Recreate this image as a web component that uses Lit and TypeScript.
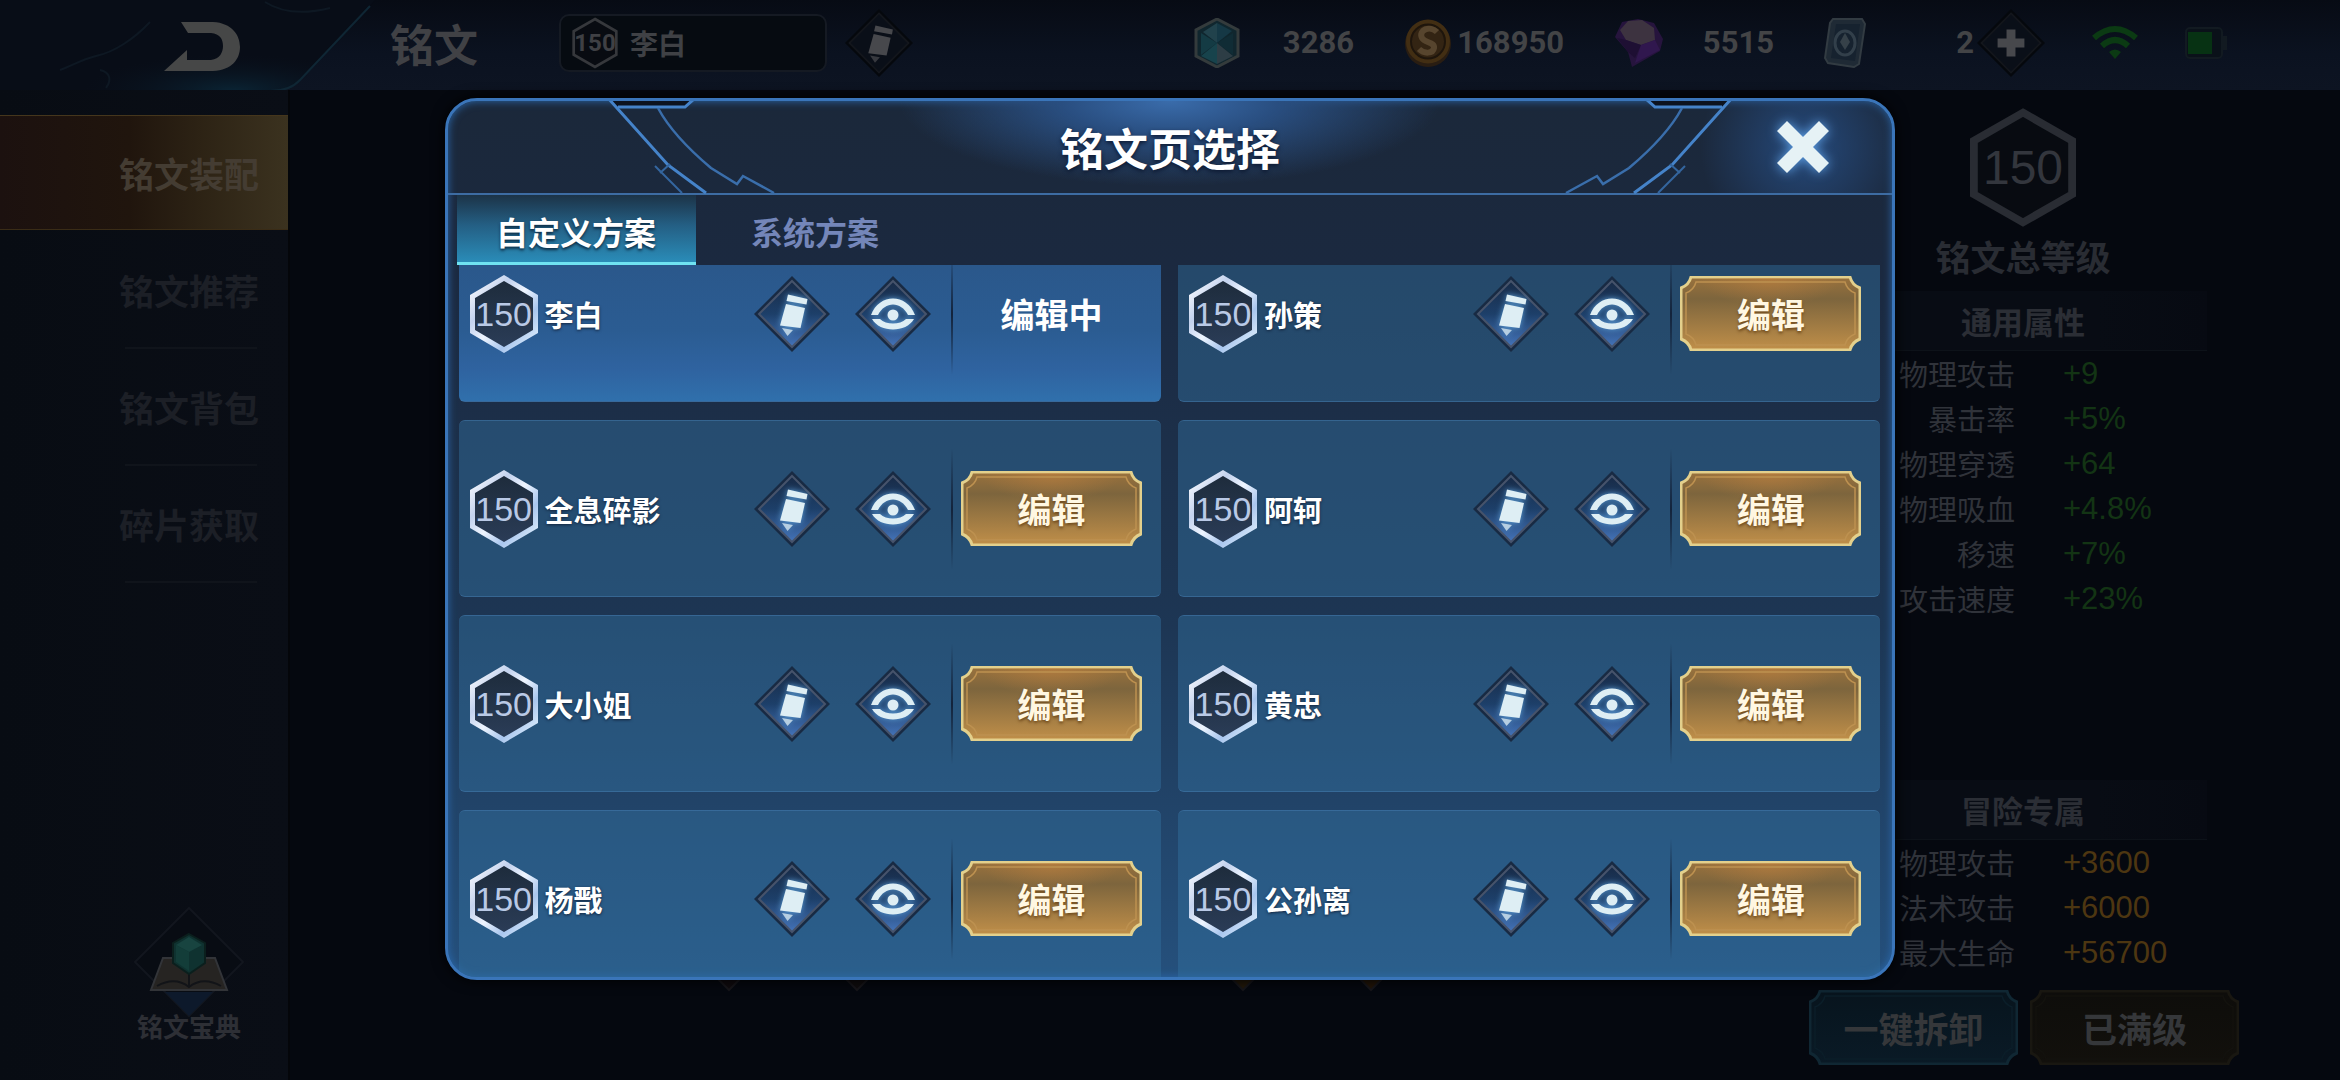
import { LitElement, html, svg, css } from "lit";
import { customElement, property, state } from "lit/decorators.js";
import { classMap } from "lit/directives/class-map.js";

const base = css`
  *, *::before, *::after { box-sizing: border-box; }
  button { font: inherit; color: inherit; background: none; border: 0; padding: 0; margin: 0; cursor: pointer; }
  svg { display: block; }
`;

/** Hexagonal level badge; the size variant picks its dimensions. */
@customElement("level-badge")
class LevelBadge extends LitElement {
  @property() level = "150";
  @property() variant: "card" | "large" | "small" = "card";

  static styles = [base, css`
    :host { display: block; flex: none; }
    .badge { display: grid; place-items: center; font-family: "Liberation Sans", "Noto Sans CJK SC", sans-serif; font-weight: 400; }
    .badge > * { grid-area: 1 / 1; }
    .card { width: 68px; height: 78px; font-size: 34px; line-height: 34px; color: #b9c9e6; }
    .large { width: 106px; height: 119px; font-size: 48px; line-height: 48px; color: #33363d; }
    .small { width: 46px; height: 52px; font-family: Roboto, sans-serif; font-weight: 700; font-size: 24px; line-height: 24px; color: #3f4044; }
    .shape { width: 100%; height: 100%; }
  `];

  render() {
    const card = this.variant === "card";
    const stroke = card ? "url(#rim)" : this.variant === "large" ? "#292c33" : "#36383c";
    return html`
      <div class="badge ${this.variant}">
        <svg class="shape" viewBox="0 0 68 78" preserveAspectRatio="none" aria-hidden="true">
          <defs>
            <linearGradient id="rim" x1="0" y1="0" x2="1" y2="1">
              <stop offset="0" stop-color="#ffffff" /><stop offset=".3" stop-color="#c3d2ee" />
              <stop offset=".5" stop-color="#eef5ff" /><stop offset=".72" stop-color="#a9c6ee" />
              <stop offset="1" stop-color="#e9f6ff" />
            </linearGradient>
            <linearGradient id="core" x1="0" y1="0" x2="0" y2="1">
              <stop offset="0" stop-color="#1d2b3b" /><stop offset="1" stop-color="#2b3d58" />
            </linearGradient>
          </defs>
          <path d="M34 3 L65.5 21.500 V56.500 L34 75 L2.500 56.500 V21.500 Z"
            fill=${card ? "url(#core)" : "#080b11"} stroke=${stroke} stroke-width=${this.variant === "small" ? 4 : 5} />
        </svg>
        <span>${this.level}</span>
      </div>`;
  }
}

const pencil = svg`
  <path d="M34 18.500 L53.500 23 L52.500 28.500 L32.500 25Z" />
  <path d="M32 28 L51 32 L46.500 52 L26 49.500Z" />
  <path d="M28 52 L39 54 L33.500 60Z" opacity=".75" />`;
const eye = svg`
  <path d="M16 39 C24 17 52 17 60 39 H53 C46 25 30 25 23 39Z" />
  <path d="M17 43 H25 C31 49 45 49 51 43 H59 C51 57 25 57 17 43Z" />
  <circle cx="38" cy="39" r="5.500" />`;
const plus = svg`<path d="M33 23 h10 v10 h10 v10 h-10 v10 h-10 v-10 h-10 v-10 h10z" />`;

/** Diamond-framed icon button. */
@customElement("diamond-button")
class DiamondButton extends LitElement {
  @property() icon: "pencil" | "eye" | "plus" = "pencil";
  @property() label = "";
  @property({ type: Boolean }) dim = false;

  static styles = [base, css`
    :host { display: block; flex: none; }
    .hit { display: block; width: 76px; height: 76px; }
    .dim { width: 68px; height: 68px; }
    .glyph { fill: #deeef4; filter: drop-shadow(0 0 3px #5d9fd8); }
    .dim .glyph { fill: #47484c; filter: none; }
  `];

  render() {
    const glyph = this.icon === "pencil" ? pencil : this.icon === "eye" ? eye : plus;
    return html`
      <button class=${classMap({ hit: true, dim: this.dim })} aria-label=${this.label}>
        <svg width="100%" height="100%" viewBox="0 0 76 76" aria-hidden="true">
          <defs>
            <linearGradient id="face" x1="0" y1="0" x2="0" y2="1">
              <stop offset="0" stop-color="#182b47" /><stop offset=".5" stop-color="#1d3f69" />
              <stop offset="1" stop-color="#4574ba" />
            </linearGradient>
          </defs>
          <path d="M38 0 L76 38 L38 76 L0 38Z" fill=${this.dim ? "#05080d" : "#182a43"} />
          <path d="M38 5 L71 38 L38 71 L5 38Z" fill=${this.dim ? "#0a0f18" : "url(#face)"}
            stroke=${this.dim ? "#13161c" : "#46536b"} stroke-width="2" />
          <g class="glyph">${glyph}</g>
        </svg>
      </button>`;
  }
}

/** Button on a plate with notched corners. */
@customElement("plate-button")
class PlateButton extends LitElement {
  @property() label = "";
  @property() tone: "gold" | "dimblue" | "dimgold" = "gold";

  static styles = [base, css`
    :host { display: block; flex: none; }
    .plate { display: grid; width: 209px; height: 75px; place-items: center; font-size: 35px; line-height: 40px; font-weight: 700; color: #35373a; }
    .plate > * { grid-area: 1 / 1; }
    .gold { width: 181px; font-size: 34px; color: #fff7e2; text-shadow: 0 2px 3px #6f4a1c; }
    .shape { width: 100%; height: 100%; }
  `];

  render() {
    const w = this.tone === "gold" ? 181 : 209;
    const tones = {
      gold: { rim: "#e3d08c", line: "#bd9150", a: "#9a723d", b: "#7d653d", c: "#c08f49" },
      dimblue: { rim: "#102733", line: "#0b1e29", a: "#08141d", b: "#081620", c: "#0a1a26" },
      dimgold: { rim: "#191711", line: "#13120e", a: "#0e0d0b", b: "#0f0e0b", c: "#12100c" },
    };
    const t = tones[this.tone];
    const outline = (i: number) => {
      const r = w - i, b = 75 - i, n = i + 10;
      return `M${n} ${i} H${w - n} Q${w - n + 2} ${n - 2} ${r} ${n + 1} V${75 - n - 1} Q${w - n + 2} ${75 - n + 2} ${w - n} ${b}
        H${n} Q${n - 2} ${75 - n + 2} ${i} ${75 - n - 1} V${n + 1} Q${n - 2} ${n - 2} ${n} ${i}Z`;
    };
    return html`
      <button class="plate ${this.tone}">
        <svg class="shape" viewBox="0 0 ${w} 75" aria-hidden="true">
          <defs>
            <linearGradient id="fill" x1="0" y1="0" x2="0" y2="1">
              <stop offset="0" stop-color=${t.a} /><stop offset=".3" stop-color=${t.b} /><stop offset="1" stop-color=${t.c} />
            </linearGradient>
            <radialGradient id="sheen" cx=".5" cy="0" r=".4">
              <stop offset="0" stop-color="#c98540" stop-opacity=".5" /><stop offset="1" stop-color="#c98540" stop-opacity="0" />
            </radialGradient>
          </defs>
          <path d=${outline(1)} fill="url(#fill)" stroke=${t.rim} stroke-width="3" />
          ${this.tone === "gold" ? svg`<path d=${outline(2)} fill="url(#sheen)" />` : ""}
          <path d=${outline(6)} fill="none" stroke=${t.line} stroke-width="1.500" />
        </svg>
        <span>${this.label}</span>
      </button>`;
  }
}

const cornerArt = html`
  <svg width="340" height="97" viewBox="0 0 340 97" fill="none" aria-hidden="true">
    <path d="M163 -1 L171 8 H240 L249 -1Z" fill="#0c131f" />
    <g stroke="#4583c9" stroke-width="3">
      <path d="M163 0 L223 67 L261 95" />
      <path d="M173 9 H240 L249 1" />
      <path d="M210 68 L237 95 M215 75 L225 66" stroke="#34669f" stroke-width="2" />
      <path d="M213 10 Q228 38 266 70 L292 86 L298 78 L329 95" stroke="#3a6eab" stroke-width="2.500" />
    </g>
  </svg>`;

/** Dialog that picks which inscription page to edit. */
@customElement("page-dialog")
class PageDialog extends LitElement {
  @state() private tab = 0;
  @state() private current = 0;

  private tabs = ["自定义方案", "系统方案"];
  private pages = ["李白", "孙策", "全息碎影", "阿轲", "大小姐", "黄忠", "杨戬", "公孙离"];

  static styles = [base, css`
    :host { display: block; width: 62%; height: 100%; }
    .dialog {
      position: relative; height: 100%; display: flex; flex-direction: column; overflow: hidden;
      border: 3px solid #3a75b9; border-radius: 32px;
      background: linear-gradient(#1b283a 0, #1b2940 20%, #1d3654 60%, #25507c 100%);
      box-shadow: inset 0 0 9px #2b69ad, 0 0 14px #000;
    }
    .head {
      display: grid; grid-template-columns: 1fr auto 1fr; align-items: center; flex: none; height: 94px;
      border-bottom: 2px solid #3d6ca3;
      background:
        radial-gradient(ellipse 270px 85px at 50% 0, #3a6cab 0, #294e80 40%, transparent 100%),
        radial-gradient(circle 105px at 94% 46px, #25497b 0, transparent 100%);
    }
    .title { margin: 0; grid-column: 2; font-size: 44px; line-height: 52px; font-weight: 700; color: #fff; text-shadow: 0 2px 4px #0c1830; }
    .close { justify-self: end; margin-right: 60px; width: 58px; height: 58px; filter: drop-shadow(0 0 6px #5fa2e8); }
    .corner { position: absolute; top: -3px; left: -3px; pointer-events: none; }
    .mirror { left: auto; right: -3px; transform: scaleX(-1); }
    .tabs { display: flex; flex: none; padding: 0 9px; height: 70px; }
    .tab { width: 239px; font-size: 32px; line-height: 40px; font-weight: 700; color: #7486b9; padding-top: 5px; border-bottom: 3px solid transparent; }
    .on { color: #fff; text-shadow: 0 2px 3px #0d2c44; border-bottom-color: #6fe3f2; background: linear-gradient(#1c3347, #245f84 45%, #2a8cb8); }
    .list {
      flex: 1; min-height: 0; overflow-y: auto; scrollbar-width: none; margin: 0; padding: 0 12px 0 11px; list-style: none;
      display: grid; grid-template-columns: 1fr 1fr; grid-auto-rows: 177px; gap: 18px 17px; align-content: start;
    }
    .card {
      display: flex; align-items: center; padding: 0 19px 0 11px; border-radius: 6px;
      border: 1px solid rgba(70, 125, 175, .5); border-width: 1px 0;
      background: rgba(52, 112, 160, .45);
    }
    .picked { background: linear-gradient(#2a5587, #2b5c92 60%, #2f63a0 82%, #3070ac); }
    .name { flex: 1; min-width: 0; margin-left: 7px; font-size: 29px; line-height: 36px; font-weight: 700; color: #fff; text-shadow: 0 1px 3px #12233c; }
    .tools { display: flex; gap: 25px; padding-right: 20px; }
    .action { display: flex; align-items: center; height: 120px; padding-left: 8px; border-left: 2px solid; border-image: linear-gradient(transparent, #13233b 50%, transparent) 1; }
    .state { width: 181px; text-align: center; font-size: 34px; line-height: 40px; font-weight: 700; color: #fff; }
  `];

  firstUpdated() {
    this.renderRoot.querySelector(".list")!.scrollTop = 40;
  }

  render() {
    return html`
      <section class="dialog" role="dialog" aria-labelledby="dialog-title">
        <header class="head">
          <h2 class="title" id="dialog-title">铭文页选择</h2>
          <button class="close" aria-label="关闭">
            <svg width="58" height="58" viewBox="0 0 58 58" aria-hidden="true">
              <path d="M13 3 L29 19 L45 3 L55 13 L39 29 L55 45 L45 55 L29 39 L13 55 L3 45 L19 29 L3 13Z" fill="#e6f2f5" />
            </svg>
          </button>
        </header>
        <div class="corner">${cornerArt}</div>
        <div class="corner mirror">${cornerArt}</div>
        <div class="tabs" role="tablist">
          ${this.tabs.map((t, i) => html`
            <button role="tab" aria-selected=${i === this.tab} class=${classMap({ tab: true, on: i === this.tab })}
              @click=${() => (this.tab = i)}>${t}</button>`)}
        </div>
        <ul class="list">
          ${this.pages.map((name, i) => html`
            <li class=${classMap({ card: true, picked: i === this.current })}>
              <level-badge></level-badge>
              <span class="name">${name}</span>
              <div class="tools">
                <diamond-button icon="pencil" label="重命名"></diamond-button>
                <diamond-button icon="eye" label="查看"></diamond-button>
              </div>
              <div class="action">
                ${i === this.current
                  ? html`<span class="state">编辑中</span>`
                  : html`<plate-button label="编辑" @click=${() => (this.current = i)}></plate-button>`}
              </div>
            </li>`)}
        </ul>
      </section>`;
  }
}

const gemIcon = html`
  <svg width="46" height="50" viewBox="0 0 46 50" aria-hidden="true">
    <path d="M23 1 L44 12 V38 L23 49 L2 38 V12Z" fill="#10262e" stroke="#343b3c" stroke-width="3" />
    <path d="M23 5 L9 14 L23 25Z" fill="#21424c" /><path d="M23 5 L38 13 L23 25Z" fill="#153845" />
    <path d="M7 15 L23 25 L7 37Z" fill="#143b44" /><path d="M39 15 L23 25 L39 37Z" fill="#102c35" />
    <path d="M7 38 L23 25 L23 46Z" fill="#17434c" /><path d="M39 38 L23 25 L23 46Z" fill="#2d3d45" />
  </svg>`;
const coinIcon = html`
  <svg width="48" height="50" viewBox="0 0 48 50" aria-hidden="true">
    <ellipse cx="24" cy="26" rx="23" ry="23" fill="#291d12" />
    <circle cx="24" cy="23.500" r="22" fill="#422e13" /><circle cx="24" cy="23.500" r="17" fill="#332413" stroke="#1e150c" stroke-width="2" />
    <path d="M33 14 C26 7 14 12 18 20 C21 25 31 24 30 30 C29 36 20 36 15 31" fill="none" stroke="#57452e" stroke-width="6" />
  </svg>`;
const crystalIcon = html`
  <svg width="50" height="50" viewBox="0 0 50 50" aria-hidden="true">
    <path d="M1 19 L8 4 L24 1 L40 5 L49 21 L46 33 L18 49 L14 34Z" fill="#26143d" />
    <path d="M6 12 L14 3 L28 2 L40 10 L41 22 L27 27 L12 22Z" fill="#3d3340" />
    <path d="M12 22 L27 27 L21 40 L14 34 L3 20Z" fill="#1e0f33" /><path d="M27 27 L41 22 L46 32 L21 45Z" fill="#30174e" />
  </svg>`;
const cardIcon = html`
  <svg width="42" height="50" viewBox="0 0 42 50" aria-hidden="true">
    <path d="M9 1 H38 L41 6 L35 46 L30 49 L4 45 L1 40 L6 5Z" fill="#1f2a35" stroke="#323b42" stroke-width="2" />
    <path d="M12 6 H36 L31 43 L7 40Z" fill="#16222f" /><ellipse cx="21" cy="25" rx="10" ry="12" fill="none" stroke="#323f4a" stroke-width="3" />
    <path d="M21 15 L26 24 L21 32 L16 24Z" fill="#364149" />
  </svg>`;

/** Screen behind the dialog, plus the dialog itself. */
@customElement("app-root")
class AppRoot extends LitElement {
  private nav = ["铭文装配", "铭文推荐", "铭文背包", "碎片获取"];
  private wallet = [
    { icon: gemIcon, amount: "3286" }, { icon: coinIcon, amount: "168950" },
    { icon: crystalIcon, amount: "5515" }, { icon: cardIcon, amount: "2" },
  ];
  private general = [["物理攻击", "+9"], ["暴击率", "+5%"], ["物理穿透", "+64"], ["物理吸血", "+4.8%"], ["移速", "+7%"], ["攻击速度", "+23%"]];
  private adventure = [["物理攻击", "+3600"], ["法术攻击", "+6000"], ["最大生命", "+56700"]];

  static styles = [base, css`
    :host { display: block; font-family: "Noto Sans CJK SC", "Noto Sans", sans-serif; color: #3b3d43; }
    .screen { position: relative; display: flex; flex-direction: column; min-height: 100vh; overflow: hidden; background: #05080f; }
    .top { display: flex; align-items: center; flex: none; height: 90px; padding: 0 113px 4px 0; background: linear-gradient(#070b14, #0b1220 60%, #0d1422); }
    .back { align-self: flex-start; flex: none; width: 375px; height: 90px; }
    .heading { margin: 0 81px 0 15px; font-size: 44px; line-height: 52px; font-weight: 700; color: #404145; white-space: nowrap; }
    .preset { display: flex; align-items: center; gap: 12px; width: 268px; height: 58px; padding-left: 11px; font-size: 28px; line-height: 36px; font-weight: 700; color: #3f4145;
      border: 2px solid #151a23; border-radius: 10px; background: #060b11; }
    .rename { margin-left: 18px; }
    .wallet { display: flex; gap: 50px; margin: 0 7px 0 auto; padding: 0; list-style: none; }
    .purse { display: flex; align-items: center; justify-content: space-between; width: 160px; height: 50px; font-family: Roboto, sans-serif; font-weight: 700; font-size: 31px; line-height: 36px; color: #434446; }
    .purse:last-child { width: 150px; }
    .more { margin: 0 46px 0 -4px; }
    .battery { margin-left: 46px; }
    .body { display: flex; flex: 1; }
    .side { display: flex; flex-direction: column; justify-content: space-between; flex: none; width: 290px; padding: 25px 0 40px; background: linear-gradient(90deg, #080c13, #0a0e16); border-right: 2px solid #04060a; }
    .nav { margin: 0; padding: 0; list-style: none; }
    .item { height: 117px; }
    .link { width: 100%; height: 115px; padding-right: 29px; text-align: right; font-size: 35px; line-height: 44px; font-weight: 700; color: #1c1f26; }
    .active { color: #443c32; background: linear-gradient(90deg, #1c110f, #20150d 45%, #2c2214 68%, #3b321f); border-top: 1px solid #45361c; border-bottom: 1px solid #3a2c16; }
    .item::after { content: ""; display: block; width: 132px; height: 2px; margin-left: 125px; background: #10141b; }
    .item:first-child::after { background: none; }
    .codex { width: 198px; margin-left: 90px; font-size: 26px; line-height: 28px; font-weight: 700; color: #2d2f35; }
    .codex svg { margin: 0 auto -6px; }
    .stage { display: flex; flex: 1; align-items: flex-end; justify-content: center; gap: 350px; padding-bottom: 88px; }
    .runes { display: flex; gap: 92px; }
    .panel { display: flex; flex-direction: column; flex: none; width: 531px; padding: 18px 101px 15px 0; }
    .stats { width: 368px; margin-left: 30px; }
    .total { display: grid; justify-items: center; row-gap: 11px; font-size: 35px; line-height: 35px; font-weight: 700; color: #292c33; margin-bottom: 18px; }
    .band { margin: 0; height: 60px; font-size: 31px; line-height: 60px; font-weight: 700; text-align: center; color: #2b2e35; background: linear-gradient(90deg, #080c14 70%, #070a12); border-bottom: 1px solid #0d1219; }
    .table { width: 100%; border-collapse: collapse; font-size: 29px; line-height: 45px; }
    .label { width: 176px; padding: 0; text-align: right; font-weight: 400; color: #30333a; }
    .value { padding: 0 0 0 48px; font-family: "Liberation Sans", sans-serif; font-size: 31px; color: #133414; }
    .gold { color: #4d3611; }
    .lower { margin-top: auto; }
    .buttons { display: flex; justify-content: space-between; margin-top: 15px; }
    .overlay { position: absolute; inset: 0; display: flex; justify-content: center; padding: 98px 0 100px; }
  `];

  private rows(data: string[][], gold = false) {
    return html`
      <table class="table"><tbody>
        ${data.map(([k, v]) => html`<tr><th class="label" scope="row">${k}</th><td class=${classMap({ value: true, gold })}>${v}</td></tr>`)}
      </tbody></table>`;
  }

  private rune(color: string) {
    return html`<svg width="36" height="36" viewBox="0 0 36 36" aria-hidden="true"><path d="M18 2 L34 18 L18 34 L2 18Z" fill=${color} stroke="#17161a" stroke-width="2" /></svg>`;
  }

  render() {
    return html`
      <div class="screen">
        <header class="top">
          <button class="back" aria-label="返回">
            <svg width="375" height="94" viewBox="0 0 375 94" aria-hidden="true">
              <defs>
                <radialGradient id="glow" cx=".62" cy="1" r=".4">
                  <stop offset="0" stop-color="#0a2434" /><stop offset="1" stop-color="#0a111d" stop-opacity="0" />
                </radialGradient>
              </defs>
              <path d="M0 0 H375 L300 80 Q290 91 270 91 H0Z" fill="#080d17" />
              <path d="M0 0 H375 L300 80 Q290 91 270 91 H0Z" fill="url(#glow)" />
              <path d="M370 6 L300 80 Q290 91 270 91 H150" fill="none" stroke="#0f2634" stroke-width="2" />
              <path d="M150 22 C135 38 115 52 96 56 C80 60 72 66 60 70 M100 70 C110 72 112 80 106 88 M265 2 Q290 18 330 8" fill="none" stroke="#0e1823" stroke-width="2" />
              <path d="M181 22 H213 C232 23 240 35 240 47 C240 59 232 70 213 71 H164 L187 50 V60 H211 C220 59 223 52 223 46 C223 39 220 34 211 33 H188 Z" fill="#464747" />
            </svg>
          </button>
          <h1 class="heading">铭文</h1>
          <button class="preset"><level-badge variant="small"></level-badge>李白</button>
          <diamond-button class="rename" icon="pencil" label="重命名" dim></diamond-button>
          <ul class="wallet">
            ${this.wallet.map((p) => html`<li class="purse">${p.icon}<span>${p.amount}</span></li>`)}
          </ul>
          <diamond-button class="more" icon="plus" label="获取" dim></diamond-button>
          <svg width="48" height="36" viewBox="0 0 48 36" fill="none" stroke="#0b3a13" stroke-width="6" aria-hidden="true">
            <path d="M3 13 Q24 -5 45 13" /><path d="M11 21 Q24 9 37 21" /><path d="M18 27 L24 34 L30 27 Q24 22 18 27Z" fill="#0b3a13" stroke="none" />
          </svg>
          <svg class="battery" width="42" height="32" viewBox="0 0 42 32" aria-hidden="true">
            <rect x="1" y="1" width="36" height="30" rx="4" fill="#0a1119" stroke="#121a21" stroke-width="2" />
            <rect x="38" y="9" width="4" height="14" fill="#121a21" /><rect x="3" y="5" width="24" height="22" fill="#073213" />
          </svg>
        </header>

        <div class="body">
          <nav class="side">
            <ul class="nav">
              ${this.nav.map((n, i) => html`<li class="item"><button class=${classMap({ link: true, active: i === 0 })}>${n}</button></li>`)}
            </ul>
            <button class="codex">
              <svg width="112" height="112" viewBox="0 0 112 112" aria-hidden="true">
                <path d="M56 2 L110 56 L56 110 L2 56Z" fill="#080c13" stroke="#12161e" stroke-width="2" />
                <path d="M32 86 H80 L56 110Z" fill="#0d192b" />
                <path d="M30 52 H52 L56 56 L60 52 H82 L94 84 H18Z" fill="#262422" stroke="#323438" stroke-width="2" />
                <path d="M24 80 Q42 70 56 81 Q70 70 88 80 M56 56 V81" fill="none" stroke="#121418" stroke-width="2" />
                <path d="M56 28 L72 37 V57 L56 68 L40 57 V37Z" fill="#0f3230" stroke="#0b1f1d" stroke-width="2" />
                <path d="M56 31 L69 39 L56 46 L43 39Z" fill="#184440" /><path d="M56 46 V65 L43 56 V39Z" fill="#133d39" />
              </svg>
              铭文宝典
            </button>
          </nav>

          <main class="stage">
            <div class="runes">${this.rune("#100b0e")}${this.rune("#100d0e")}</div>
            <div class="runes">${this.rune("#22180a")}${this.rune("#221508")}</div>
          </main>

          <aside class="panel">
            <div class="stats">
              <div class="total"><level-badge variant="large"></level-badge>铭文总等级</div>
              <h3 class="band">通用属性</h3>
              ${this.rows(this.general)}
            </div>
            <div class="stats lower">
              <h3 class="band">冒险专属</h3>
              ${this.rows(this.adventure, true)}
            </div>
            <div class="buttons">
              <plate-button tone="dimblue" label="一键拆卸"></plate-button>
              <plate-button tone="dimgold" label="已满级"></plate-button>
            </div>
          </aside>
        </div>

        <div class="overlay"><page-dialog></page-dialog></div>
      </div>`;
  }
}
